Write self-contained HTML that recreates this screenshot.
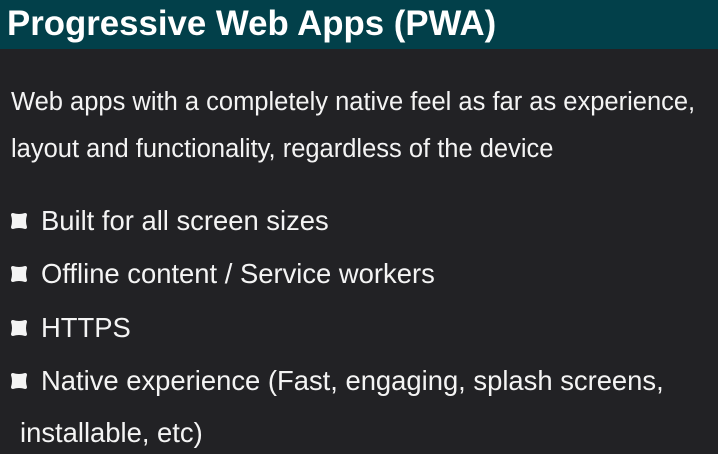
<!DOCTYPE html>
<html><head><style>
body{margin:0;width:718px;height:454px;background:#222225;overflow:hidden;font-family:"Liberation Sans",sans-serif;color:#f4f4f4;position:relative}
.h{position:absolute;left:0;top:0;width:718px;height:49px;background:#02404a}
.h span{position:absolute;left:7px;top:5px;font-size:34.8px;line-height:1.1;font-weight:bold;color:#fff;white-space:nowrap}
.t{position:absolute;font-size:25.5px;white-space:nowrap;line-height:1}
.b{font-size:27.4px}
svg{position:absolute}
</style></head><body>
<div class="h"><span>Progressive Web Apps (PWA)</span></div>
<div class="t" style="left:11px;top:90px">Web apps with a completely native feel as far as experience,</div>
<div class="t" style="left:11px;top:137px">layout and functionality, regardless of the device</div>
<svg width="0" height="0"><defs><path id="b" d="M3,1 Q9,3 15,1 Q17,1 17,3 Q15,9 17,15 Q17,17 15,17 Q9,15 3,17 Q1,17 1,15 Q3,9 1,3 Q1,1 3,1Z" fill="#f4f4f4"/></defs></svg>
<svg style="left:10px;top:212px" width="18" height="18"><use href="#b"/></svg>
<svg style="left:10px;top:265px" width="18" height="18"><use href="#b"/></svg>
<svg style="left:10px;top:319px" width="18" height="18"><use href="#b"/></svg>
<svg style="left:10px;top:372px" width="18" height="18"><use href="#b"/></svg>
<div class="t b" style="left:41px;top:207px">Built for all screen sizes</div>
<div class="t b" style="left:41px;top:260px">Offline content / Service workers</div>
<div class="t b" style="left:41px;top:314px">HTTPS</div>
<div class="t b" style="left:41px;top:367px">Native experience (Fast, engaging, splash screens,</div>
<div class="t b" style="left:20px;top:419px">installable, etc)</div>
</body></html>
